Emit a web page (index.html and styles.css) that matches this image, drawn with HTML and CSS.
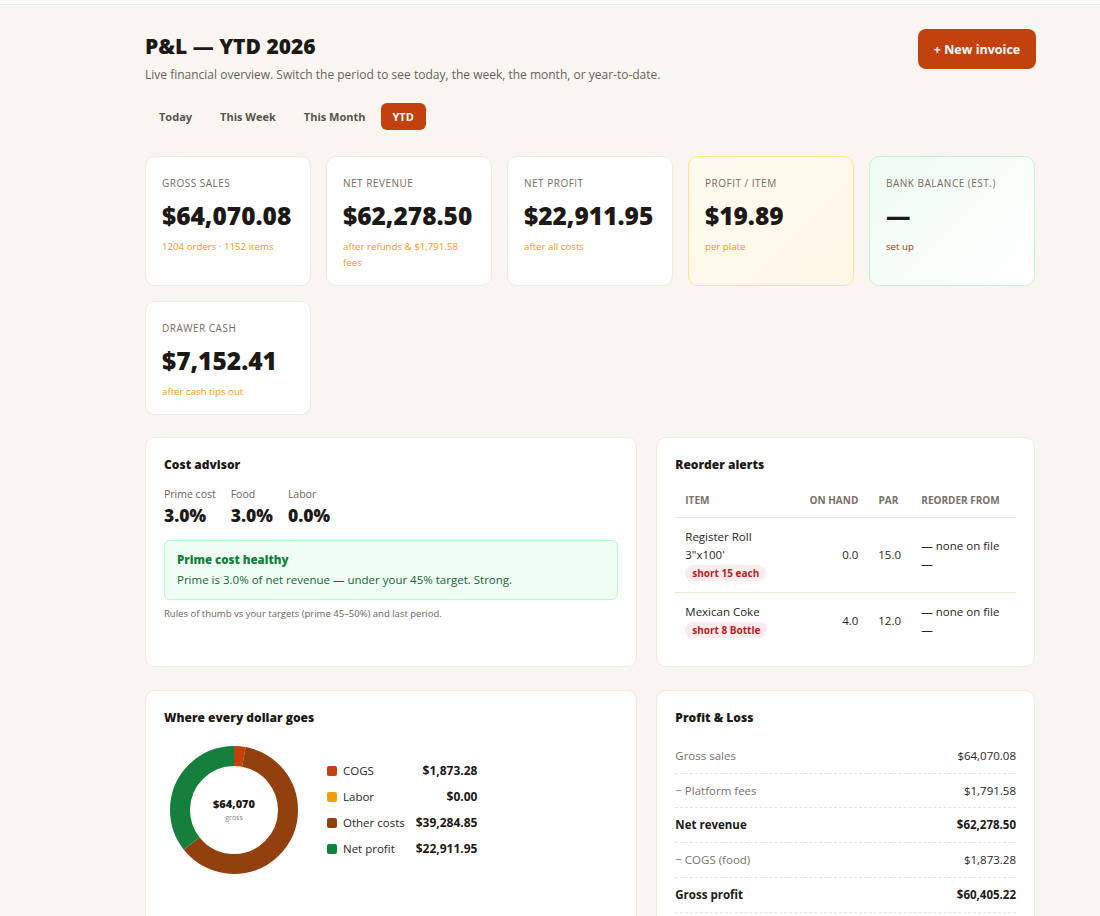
FILE: index.html
```html
<!DOCTYPE html>
<html lang="en">
<head>
<meta charset="utf-8">
<title>P&amp;L — YTD 2026</title>
<link rel="stylesheet" href="styles.css">
</head>
<body>
<div class="topstrip"></div>
<main class="page">
  <header class="head">
    <div class="head-left">
      <h1 class="title">P&amp;L — YTD 2026</h1>
      <p class="subtitle">Live financial overview. Switch the period to see today, the week, the month, or year-to-date.</p>
      <nav class="tabs">
        <button class="tab">Today</button>
        <button class="tab">This Week</button>
        <button class="tab">This Month</button>
        <button class="tab tab-active">YTD</button>
      </nav>
    </div>
    <button class="btn-primary">+ New invoice</button>
  </header>

  <section class="kpis">
    <div class="kpi">
      <div class="kpi-label">Gross sales</div>
      <div class="kpi-value">$64,070.08</div>
      <div class="kpi-sub">1204 orders · 1152 items</div>
    </div>
    <div class="kpi">
      <div class="kpi-label">Net revenue</div>
      <div class="kpi-value">$62,278.50</div>
      <div class="kpi-sub">after refunds &amp; $1,791.58 fees</div>
    </div>
    <div class="kpi">
      <div class="kpi-label">Net profit</div>
      <div class="kpi-value">$22,911.95</div>
      <div class="kpi-sub">after all costs</div>
    </div>
    <div class="kpi kpi-amber">
      <div class="kpi-label">Profit / item</div>
      <div class="kpi-value">$19.89</div>
      <div class="kpi-sub">per plate</div>
    </div>
    <div class="kpi kpi-green">
      <div class="kpi-label">Bank balance (est.)</div>
      <div class="kpi-value">—</div>
      <div class="kpi-sub kpi-sub-link">set up</div>
    </div>
    <div class="kpi">
      <div class="kpi-label">Drawer cash</div>
      <div class="kpi-value">$7,152.41</div>
      <div class="kpi-sub">after cash tips out</div>
    </div>
  </section>

  <section class="panels">
    <div class="panel">
      <h2 class="panel-title">Cost advisor</h2>
      <div class="metrics">
        <div class="metric">
          <div class="metric-label">Prime cost</div>
          <div class="metric-value">3.0%</div>
        </div>
        <div class="metric">
          <div class="metric-label">Food</div>
          <div class="metric-value">3.0%</div>
        </div>
        <div class="metric">
          <div class="metric-label">Labor</div>
          <div class="metric-value">0.0%</div>
        </div>
      </div>
      <div class="notice">
        <div class="notice-title">Prime cost healthy</div>
        <div class="notice-text">Prime is 3.0% of net revenue — under your 45% target. Strong.</div>
      </div>
      <p class="footnote">Rules of thumb vs your targets (prime 45–50%) and last period.</p>
    </div>

    <div class="panel">
      <h2 class="panel-title">Reorder alerts</h2>
      <table class="reorder">
        <colgroup>
          <col class="c-item"><col class="c-hand"><col class="c-par"><col class="c-from">
        </colgroup>
        <thead>
          <tr><th>Item</th><th class="num">On hand</th><th class="num">Par</th><th class="from">Reorder from</th></tr>
        </thead>
        <tbody>
          <tr>
            <td><div class="item-name">Register Roll 3"x100'</div><div class="item-badge"><span class="badge">short 15 each</span></div></td>
            <td class="num">0.0</td>
            <td class="num">15.0</td>
            <td class="from">— none on file —</td>
          </tr>
          <tr>
            <td><div class="item-name">Mexican Coke</div><div class="item-badge"><span class="badge">short 8 Bottle</span></div></td>
            <td class="num">4.0</td>
            <td class="num">12.0</td>
            <td class="from">— none on file —</td>
          </tr>
        </tbody>
      </table>
    </div>

    <div class="panel">
      <h2 class="panel-title">Where every dollar goes</h2>
      <div class="donut-wrap">
        <div class="donut">
          <svg width="140" height="140" viewBox="0 0 140 140">
            <g transform="rotate(-90 70 70)" fill="none" stroke-width="20">
              <circle cx="70" cy="70" r="54" stroke="#c2410c" stroke-dasharray="9.92 329.37" stroke-dashoffset="0"/>
              <circle cx="70" cy="70" r="54" stroke="#92400e" stroke-dasharray="208.04 131.25" stroke-dashoffset="-9.92"/>
              <circle cx="70" cy="70" r="54" stroke="#15803d" stroke-dasharray="121.33 217.96" stroke-dashoffset="-217.96"/>
            </g>
          </svg>
          <div class="donut-center">
            <div class="donut-value">$64,070</div>
            <div class="donut-label">gross</div>
          </div>
        </div>
        <div class="legend">
          <span class="sw sw-cogs"></span><span class="lg-label">COGS</span><span class="lg-value">$1,873.28</span>
          <span class="sw sw-labor"></span><span class="lg-label">Labor</span><span class="lg-value">$0.00</span>
          <span class="sw sw-other"></span><span class="lg-label">Other costs</span><span class="lg-value">$39,284.85</span>
          <span class="sw sw-net"></span><span class="lg-label">Net profit</span><span class="lg-value">$22,911.95</span>
        </div>
      </div>
    </div>

    <div class="panel">
      <h2 class="panel-title">Profit &amp; Loss</h2>
      <div class="pl">
        <div class="pl-row"><span>Gross sales</span><span class="pl-amt">$64,070.08</span></div>
        <div class="pl-row"><span>− Platform fees</span><span class="pl-amt">$1,791.58</span></div>
        <div class="pl-row pl-total"><span>Net revenue</span><span class="pl-amt">$62,278.50</span></div>
        <div class="pl-row"><span>− COGS (food)</span><span class="pl-amt">$1,873.28</span></div>
        <div class="pl-row pl-total"><span>Gross profit</span><span class="pl-amt">$60,405.22</span></div>
      </div>
    </div>
  </section>
</main>
</body>
</html>
```

FILE: styles.css
```css
* { box-sizing: border-box; }

html, body {
  margin: 0;
  padding: 0;
  background: #f9f6f1;
  font-family: "Open Sans", "Noto Sans", "DejaVu Sans", sans-serif;
  color: #1c1917;
}

.topstrip {
  height: 5px;
  background: #fbf9f6;
  border-bottom: 1px solid #ebe6df;
}

.page {
  width: 890px;
  margin-left: 145px;
  padding-top: 23px;
  padding-bottom: 40px;
}

.head {
  display: flex;
  justify-content: space-between;
  align-items: flex-start;
}

.title {
  margin: 5px 0 7px;
  font-size: 21px;
  line-height: 26px;
  font-weight: 800;
  color: #1c1917;
}

.subtitle {
  margin: 0;
  font-size: 12px;
  line-height: 18px;
  color: #69615b;
}

.tabs {
  display: flex;
  gap: 0;
  margin-top: 19px;
}

.tab {
  border: 0;
  background: transparent;
  font-family: inherit;
  font-size: 11px;
  line-height: 13px;
  font-weight: 700;
  color: #57534e;
  padding: 7px 14px;
  border-radius: 6px;
  cursor: pointer;
}

.tab-active {
  margin-left: 1px;
  padding: 7px 12px;
  background: #c2410c;
  color: #ffffff;
}

.btn-primary {
  border: 0;
  background: #c2410c;
  color: #ffffff;
  font-family: inherit;
  font-size: 12.5px;
  font-weight: 700;
  height: 40px;
  padding: 0 15px;
  border-radius: 8px;
  width: 118px;
  margin-top: 1px;
  margin-right: -1px;
}

.kpis {
  display: grid;
  grid-template-columns: repeat(5, 1fr);
  gap: 15px;
  margin-top: 26px;
}

.kpi {
  background: #ffffff;
  border: 1px solid #efe9e1;
  border-radius: 10px;
  padding: 19px 16px 14px;
}

.kpi-amber {
  background: linear-gradient(135deg, #fffbf0, #fff7e8);
  border-color: #fde68a;
}

.kpi-green {
  background: linear-gradient(135deg, #effcf3, #ffffff);
  border-color: #c3f0d2;
}

.kpi-label {
  font-size: 10px;
  line-height: 14px;
  letter-spacing: 0.5px;
  text-transform: uppercase;
  font-weight: 500;
  color: #736b64;
}

.kpi-value {
  margin-top: 11px;
  font-size: 24.5px;
  line-height: 30px;
  font-weight: 800;
  color: #1c1917;
}

.kpi-sub {
  margin-top: 8px;
  font-size: 9.7px;
  line-height: 16px;
  font-weight: 500;
  color: #f29a0c;
}

.kpi-sub-link { color: #9a3412; }

.panels {
  display: grid;
  grid-template-columns: 1.3fr 1fr;
  column-gap: 19px;
  row-gap: 23px;
  margin-top: 22px;
}

.panel {
  background: #ffffff;
  border: 1px solid #efe9e1;
  border-radius: 10px;
  padding: 18px 18px 17px;
}

.panel-title {
  margin: 0;
  font-size: 12px;
  line-height: 18px;
  font-weight: 800;
  color: #1c1917;
}

.metrics {
  display: flex;
  gap: 15px;
  margin-top: 13px;
}

.metric-label {
  font-size: 10.5px;
  line-height: 14px;
  color: #6b635c;
}

.metric-value {
  margin-top: 3px;
  font-size: 17.5px;
  line-height: 22px;
  font-weight: 800;
  color: #1c1917;
}

.notice {
  margin-top: 14px;
  background: #f0fdf4;
  border: 1px solid #bbf7d0;
  border-radius: 6px;
  padding: 10px 12px;
}

.notice-title {
  font-size: 11.5px;
  line-height: 18px;
  font-weight: 800;
  color: #15803d;
}

.notice-text {
  margin-top: 2px;
  font-size: 11.5px;
  line-height: 18px;
  color: #166534;
}

.footnote {
  margin: 7px 0 0;
  font-size: 9.5px;
  line-height: 14px;
  color: #6b635c;
}

.reorder {
  width: 100%;
  margin-top: 9px;
  border-collapse: collapse;
  table-layout: fixed;
  font-size: 11.5px;
}

.c-item { width: 123px; }
.c-hand { width: 70px; }
.c-par { width: 40px; }

.reorder th {
  font-size: 10px;
  line-height: 14px;
  font-weight: 700;
  text-transform: uppercase;
  color: #78716c;
  text-align: left;
  padding: 10px 10px;
  border-bottom: 1px solid #ece6de;
  white-space: nowrap;
}

.reorder td {
  padding: 10px 10px;
  line-height: 18px;
  color: #292524;
  vertical-align: middle;
}

.reorder tbody tr:first-child td { border-bottom: 1px solid #ece6de; }

.reorder .num { text-align: right; }
.reorder .from { padding-left: 13px; padding-right: 8px; }

.item-badge {
  height: 18px;
  display: flex;
  align-items: center;
}

.badge {
  display: inline-block;
  padding: 0 7px;
  border-radius: 8px;
  background: #fdecee;
  color: #b91c1c;
  font-size: 10px;
  line-height: 16px;
  font-weight: 700;
}

.donut-wrap {
  display: flex;
  align-items: center;
  gap: 23px;
  margin-top: 13px;
}

.donut {
  position: relative;
  width: 140px;
  height: 140px;
}

.donut svg { display: block; }

.donut-center {
  position: absolute;
  inset: 0;
  display: flex;
  flex-direction: column;
  align-items: center;
  justify-content: center;
}

.donut-value {
  font-size: 11px;
  line-height: 14px;
  font-weight: 800;
  color: #1c1917;
}

.donut-label {
  margin-top: 2px;
  font-size: 7px;
  line-height: 10px;
  color: #8a837c;
}

.legend {
  display: grid;
  grid-template-columns: 10px auto auto;
  column-gap: 6px;
  row-gap: 8px;
  align-items: center;
  font-size: 11.5px;
  line-height: 18px;
}

.sw {
  width: 10px;
  height: 10px;
  border-radius: 2px;
}

.sw-cogs { background: #c2410c; }
.sw-labor { background: #f59e0b; }
.sw-other { background: #92400e; }
.sw-net { background: #15803d; }

.lg-label { color: #292524; }

.lg-value {
  margin-left: 5px;
  text-align: right;
  font-size: 12px;
  font-weight: 700;
  color: #1c1917;
}

.pl { margin-top: 12px; }

.pl-row {
  display: flex;
  justify-content: space-between;
  padding: 8px 0;
  line-height: 17.7px;
  font-size: 11.5px;
  color: #78716c;
  border-bottom: 1px dashed #e9e3db;
}

.pl-amt { color: #292524; }

.pl-total {
  font-weight: 700;
  color: #1c1917;
}

.pl-total .pl-amt { color: #1c1917; }
```
